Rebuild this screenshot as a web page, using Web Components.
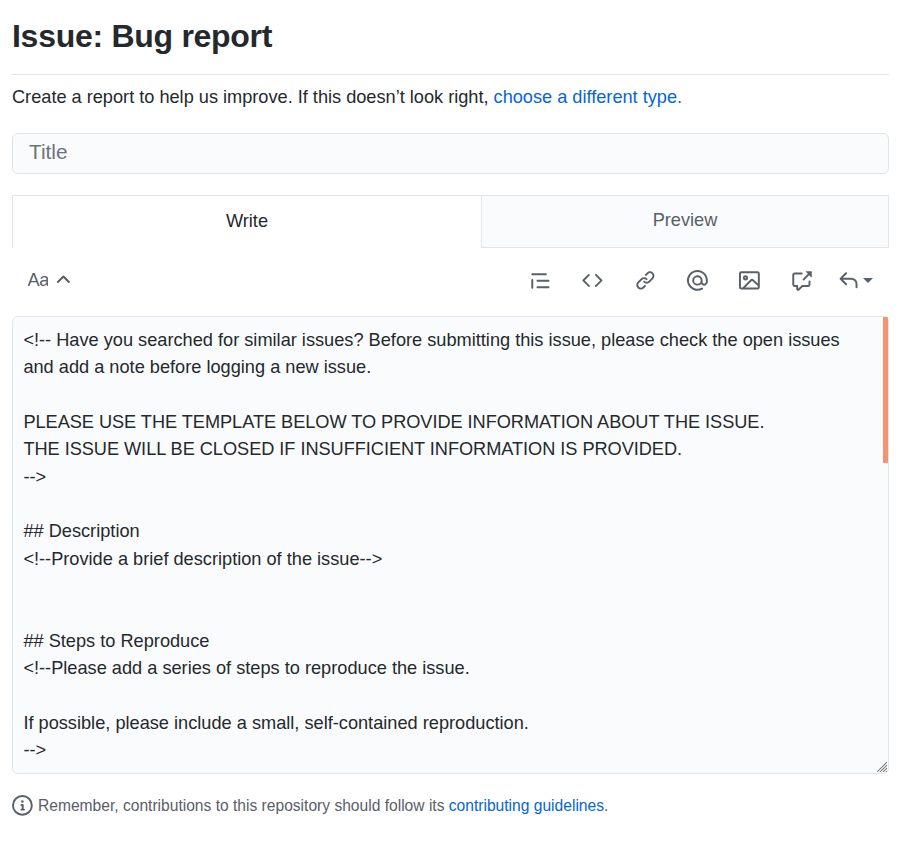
<!DOCTYPE html>
<html lang="en"><head><meta charset="utf-8"><title>Issue: Bug report</title>
<style>
body{margin:0;background:#fff;color:#24292e;font:18.2px/27.3px "Liberation Sans",Arial,sans-serif}
</style></head><body>
<issue-form></issue-form>
<script>
const ICONS={
quote:'<path d="M1.75 2.5a.75.75 0 000 1.5h10.5a.75.75 0 000-1.5H1.75zm4 5a.75.75 0 000 1.5h8.5a.75.75 0 000-1.5h-8.5zm0 5a.75.75 0 000 1.5h8.5a.75.75 0 000-1.5h-8.5zM2.5 7.75a.75.75 0 00-1.5 0v6a.75.75 0 001.5 0v-6z"/>',
code:'<path d="M4.72 3.22a.75.75 0 011.06 1.06L2.06 8l3.72 3.72a.75.75 0 11-1.06 1.06L.47 8.53a.75.75 0 010-1.06l4.25-4.25zm6.56 0a.75.75 0 10-1.06 1.06L13.94 8l-3.72 3.72a.75.75 0 101.06 1.06l4.25-4.25a.75.75 0 000-1.06l-4.25-4.25z"/>',
link:'<path d="M7.775 3.275a.75.75 0 001.06 1.06l1.25-1.25a2 2 0 112.83 2.83l-2.5 2.5a2 2 0 01-2.83 0 .75.75 0 00-1.06 1.06 3.5 3.5 0 004.95 0l2.5-2.5a3.5 3.5 0 00-4.95-4.95l-1.25 1.25zm-4.69 9.64a2 2 0 010-2.83l2.5-2.5a2 2 0 012.83 0 .75.75 0 001.06-1.06 3.5 3.5 0 00-4.95 0l-2.5 2.5a3.5 3.5 0 004.95 4.95l1.25-1.25a.75.75 0 00-1.06-1.06l-1.25 1.25a2 2 0 01-2.83 0z"/>',
mention:'<path d="M4.75 2.37a6.5 6.5 0 006.5 11.26.75.75 0 01.75 1.298 8 8 0 113.994-7.273.754.754 0 01.006.095v1.5a2.75 2.75 0 01-5.072 1.475A4 4 0 1112 8v1.25a1.25 1.25 0 002.5 0V7.867a6.5 6.5 0 00-9.75-5.496V2.37zM10.5 8a2.5 2.5 0 10-5 0 2.5 2.5 0 005 0z"/>',
image:'<path fill-rule="evenodd" d="M1.75 2.5a.25.25 0 00-.25.25v10.5c0 .138.112.25.25.25h.94a.76.76 0 01.03-.03l6.077-6.078a1.75 1.75 0 012.412-.06L14.5 10.31V2.75a.25.25 0 00-.25-.25H1.75zm12.5 11H4.81l5.048-5.047a.25.25 0 01.344-.009l4.298 3.889v.917a.25.25 0 01-.25.25zm1.75-.25V2.75A1.75 1.75 0 0014.25 1H1.75A1.75 1.75 0 000 2.75v10.5C0 14.216.784 15 1.75 15h12.5A1.75 1.75 0 0016 13.25zM5.5 6a.5.5 0 11-1 0 .5.5 0 011 0zM7 6a2 2 0 11-4 0 2 2 0 014 0z"/>',
reference:'<path fill-rule="evenodd" d="M16 1.25v4.146a.25.25 0 01-.427.177L14.03 4.03l-3.75 3.75a.75.75 0 11-1.06-1.06l3.75-3.75-1.543-1.543A.25.25 0 0111.604 1h4.146a.25.25 0 01.25.25zM2.75 3.5a.25.25 0 00-.25.25v7.5c0 .138.112.25.25.25h2a.75.75 0 01.75.75v2.19l2.72-2.72a.75.75 0 01.53-.22h4.5a.25.25 0 00.25-.25v-2.5a.75.75 0 111.5 0v2.5A1.75 1.75 0 0113.25 13H9.06l-2.573 2.573A1.457 1.457 0 014 14.543V13H2.75A1.75 1.75 0 011 11.25v-7.5C1 2.784 1.784 2 2.75 2h5.5a.75.75 0 010 1.5h-5.5z"/>',
reply:'<path d="M6.78 1.97a.75.75 0 010 1.06L3.81 6h6.44A4.75 4.75 0 0115 10.75v2.5a.75.75 0 01-1.5 0v-2.5a3.25 3.25 0 00-3.25-3.25H3.81l2.97 2.97a.75.75 0 11-1.06 1.06L1.47 7.28a.75.75 0 010-1.06l4.25-4.25a.75.75 0 011.06 0z"/>',
chevron:'<path d="M3.22 9.78a.75.75 0 010-1.06l4.25-4.25a.75.75 0 011.06 0l4.25 4.25a.75.75 0 01-1.06 1.06L8 6.06 4.28 9.78a.75.75 0 01-1.06 0z"/>',
info:'<path fill-rule="evenodd" d="M8 1.5a6.5 6.5 0 100 13 6.5 6.5 0 000-13zM0 8a8 8 0 1116 0A8 8 0 010 8zm6.5-.25A.75.75 0 017.25 7h1a.75.75 0 01.75.75v2.75h.25a.75.75 0 010 1.5h-2a.75.75 0 010-1.5h.25v-2h-.25a.75.75 0 01-.75-.75zM8 6a1 1 0 100-2 1 1 0 000 2z"/>'
};
const define=(name,html)=>customElements.define(name,class extends HTMLElement{
  constructor(){super();const t=document.createElement('template');t.innerHTML=html;this.attachShadow({mode:'open'}).append(t.content.cloneNode(true));}
});
customElements.define('octo-icon',class extends HTMLElement{
  connectedCallback(){if(!this.shadowRoot)this.attachShadow({mode:'open'}).innerHTML=`<style>:host{display:block;flex:none;width:20.8px;height:20.8px}svg{display:block;width:100%;height:100%;fill:currentColor;overflow:visible}</style><svg viewBox="0 0 16 16" aria-hidden="true">${ICONS[this.getAttribute('name')]}</svg>`;}
});
define('text-link',`<style>:host{color:#0366d6;cursor:pointer}</style><slot></slot>`);
define('form-heading',`<style>:host{display:block}
h1{margin:0;height:56px;padding-top:18px;border-bottom:1px solid #e1e4e8;font-size:32px;line-height:36px;font-weight:700;letter-spacing:-.28px;white-space:nowrap}
p{margin:0;padding-top:9px;letter-spacing:-.01px;white-space:nowrap}</style><h1><slot name="title"></slot></h1><p><slot></slot></p>`);
define('title-field',`<style>:host{display:block;box-sizing:border-box;height:41px;border:1px solid #e1e4e8;border-radius:6px;background:#fafbfc;color:#6a737d;padding:0 16px;font-size:20.8px;line-height:36px}</style><slot></slot>`);
define('editor-tabs',`<style>:host{display:flex;height:53px}
div{box-sizing:border-box;border:1px solid #e1e4e8;text-align:center;white-space:nowrap}
.on{width:469px;border-right:0;border-bottom:0;line-height:50px}
.off{flex:1;background:#fafbfc;color:#586069;line-height:48px}</style><div class="on"><slot name="write"></slot></div><div class="off"><slot name="preview"></slot></div>`);
define('editor-toolbar',`<style>:host{display:flex;justify-content:space-between;align-items:center;height:68px;box-sizing:border-box;padding:0 16px 3px 15.5px;color:#586069}
div{display:flex;align-items:center}.size{gap:5px}.size span{width:20.8px;overflow:hidden;letter-spacing:-.5px}.size octo-icon{margin-top:0}
.tools{gap:31.3px}.reply{gap:4.3px;margin-left:-5px}.caret{border:5px solid transparent;border-top-color:currentColor;border-bottom:0}</style>
<div class="size"><span>Aa</span><octo-icon name="chevron"></octo-icon></div>
<div class="tools"><octo-icon name="quote"></octo-icon><octo-icon name="code"></octo-icon><octo-icon name="link"></octo-icon><octo-icon name="mention"></octo-icon><octo-icon name="image"></octo-icon><octo-icon name="reference"></octo-icon><div class="reply"><octo-icon name="reply"></octo-icon><span class="caret"></span></div></div>`);
define('body-field',`<style>:host{display:block;position:relative;box-sizing:border-box;height:458px;border:1px solid #e1e4e8;border-radius:6px;background:#fafbfc;padding:9.6px 30px 0 10.4px;white-space:pre-wrap;line-height:27.35px}
.bar{position:absolute;right:0;top:0;width:5px;height:146px;background:#f4946c;border-radius:0 1px 1px 1px}
svg{position:absolute;right:1px;bottom:1px}
::slotted(span){letter-spacing:-.045px}</style><slot></slot><span class="bar"></span><svg width="10" height="10" viewBox="0 0 10 10" fill="none" stroke="#777" stroke-width="1.1" stroke-dasharray="1.2 .2"><path d="M0 10L10 0M3 10L10 3M6 10L10 6M9 10L10 9"/></svg>`);
define('guide-note',`<style>:host{display:flex;align-items:center;gap:5.2px;color:#586069;font-size:15.6px;line-height:24px;white-space:nowrap}</style><octo-icon name="info"></octo-icon><span><slot></slot></span>`);
define('issue-form',`<style>:host{display:flex;flex-direction:column;padding:0 14px 0 12px}
title-field{margin-top:22px}editor-tabs{margin-top:21px}guide-note{margin-top:19.4px}</style>
<form-heading><span slot="title">Issue: Bug report</span>Create a report to help us improve. If this doesn’t look right, <text-link>choose a different type.</text-link></form-heading>
<title-field>Title</title-field>
<editor-tabs><span slot="write">Write</span><span slot="preview">Preview</span></editor-tabs>
<editor-toolbar></editor-toolbar>
<body-field>&lt;!-- Have you searched for similar issues? Before submitting this issue, please check the open issues
and add a note before logging a new issue.

<span>PLEASE USE THE TEMPLATE BELOW TO PROVIDE INFORMATION ABOUT THE ISSUE.
THE ISSUE WILL BE CLOSED IF INSUFFICIENT INFORMATION IS PROVIDED.</span>
--&gt;

## Description
&lt;!--Provide a brief description of the issue--&gt;


## Steps to Reproduce
&lt;!--Please add a series of steps to reproduce the issue.

If possible, please include a small, self-contained reproduction.
--&gt;</body-field>
<guide-note>Remember, contributions to this repository should follow its <text-link>contributing guidelines</text-link>.</guide-note>`);
</script></body></html>
